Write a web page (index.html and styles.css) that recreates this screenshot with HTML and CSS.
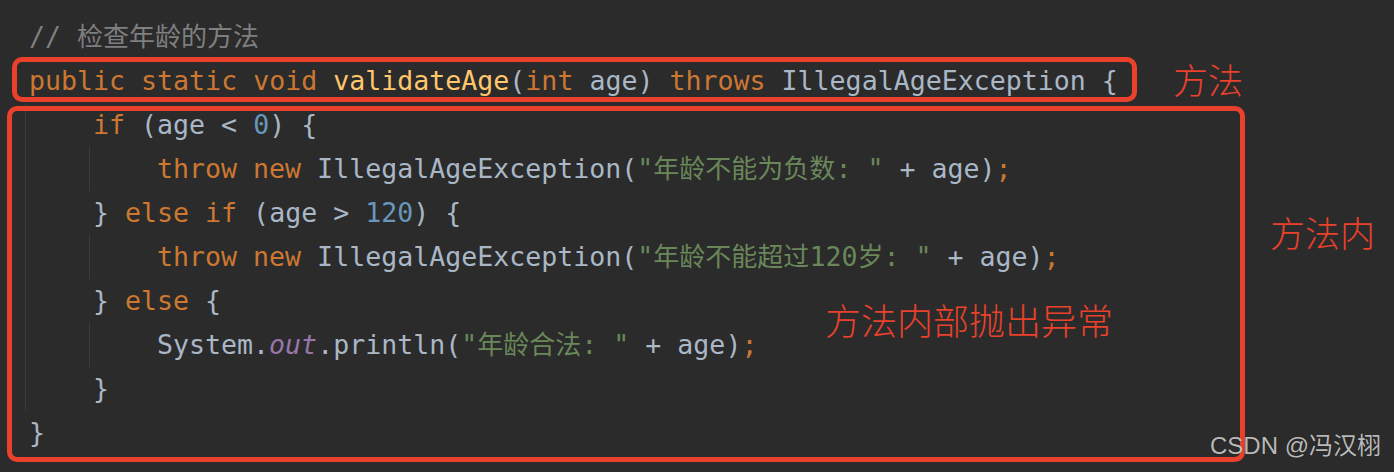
FILE: index.html
```html
<!DOCTYPE html>
<html lang="zh-CN">
<head>
<meta charset="utf-8">
<title>validateAge</title>
<link rel="stylesheet" href="styles.css">
</head>
<body>
<div class="canvas">
  <div class="code">
    <div class="line"><span class="c">// <span class="cn">检查年龄的方法</span></span></div>
    <div class="line"><span class="k">public static void</span> <span class="m">validateAge</span>(<span class="k">int</span> age) <span class="k">throws</span> IllegalAgeException {</div>
    <div class="guide">
      <div class="line i1"><span class="k">if</span> (age &lt; <span class="n">0</span>) {</div>
      <div class="guide inner">
        <div class="line i1"><span class="k">throw new</span> IllegalAgeException(<span class="s">"<span class="cn">年龄不能为负数</span>: "</span> + age)<span class="k">;</span></div>
      </div>
      <div class="line i1">} <span class="k">else if</span> (age &gt; <span class="n">120</span>) {</div>
      <div class="guide inner">
        <div class="line i1"><span class="k">throw new</span> IllegalAgeException(<span class="s">"<span class="cn">年龄不能超过</span>120<span class="cn">岁</span>: "</span> + age)<span class="k">;</span></div>
      </div>
      <div class="line i1">} <span class="k">else</span> {</div>
      <div class="guide inner">
        <div class="line i1">System.<span class="o">out</span>.println(<span class="s">"<span class="cn">年龄合法</span>: "</span> + age)<span class="k">;</span></div>
      </div>
      <div class="line i1">}</div>
    </div>
    <div class="line">}</div>
  </div>

  <div class="box box-method"></div>
  <div class="box box-body"></div>
  <div class="label label-method">方法</div>
  <div class="label label-inside">方法内</div>
  <div class="label label-throw">方法内部抛出异常</div>
  <div class="watermark">CSDN @冯汉栩</div>
</div>
</body>
</html>
```

FILE: styles.css
```css
html, body {
  margin: 0;
  padding: 0;
  background: #2b2b2b;
}

.canvas {
  position: relative;
  width: 1394px;
  height: 472px;
  overflow: hidden;
  background: #2b2b2b;
}

.code {
  padding: 15px 0 0 29px;
  font-family: "DejaVu Sans Mono", "Liberation Mono", "Noto Sans CJK SC", monospace;
  font-size: 26.6px;
  color: #a9b7c6;
}

.line {
  height: 44px;
  line-height: 44px;
  white-space: pre;
}

.i1 {
  padding-left: 64px;
}

.guide {
  margin-left: -4px;
  padding-left: 3px;
  border-left: 1px solid #3b3b3b;
}

.guide.inner {
  margin-left: 60px;
}

.cn {
  font-family: "Noto Sans CJK SC", sans-serif;
  font-size: 26px;
  line-height: 1;
}

.c { color: #7f7f7f; }
.k { color: #cc7832; }
.m { color: #ffc66d; }
.n { color: #6897bb; }
.s { color: #6a8759; }
.o { color: #9876aa; font-style: italic; }

.box {
  position: absolute;
  box-sizing: border-box;
  border: 5px solid #e9412b;
  border-radius: 10px;
}

.box-method {
  left: 12px;
  top: 57px;
  width: 1125px;
  height: 45px;
}

.box-body {
  left: 7px;
  top: 106px;
  width: 1238px;
  height: 356px;
}

.label {
  position: absolute;
  font-family: "Noto Sans CJK SC", sans-serif;
  font-weight: 300;
  color: #e9412b;
  line-height: 1;
  white-space: nowrap;
}

.label-method {
  left: 1173px;
  top: 61px;
  font-size: 35px;
}

.label-inside {
  left: 1270px;
  top: 214px;
  font-size: 35px;
}

.label-throw {
  left: 825px;
  top: 301px;
  font-size: 36px;
}

.watermark {
  position: absolute;
  left: 1210px;
  top: 434px;
  font-family: "Liberation Sans", "Noto Sans CJK SC", sans-serif;
  font-size: 24px;
  line-height: 1;
  color: rgba(215, 215, 215, 0.85);
  text-shadow: 0 0 1px rgba(0, 0, 0, 0.4);
  white-space: nowrap;
}
```
